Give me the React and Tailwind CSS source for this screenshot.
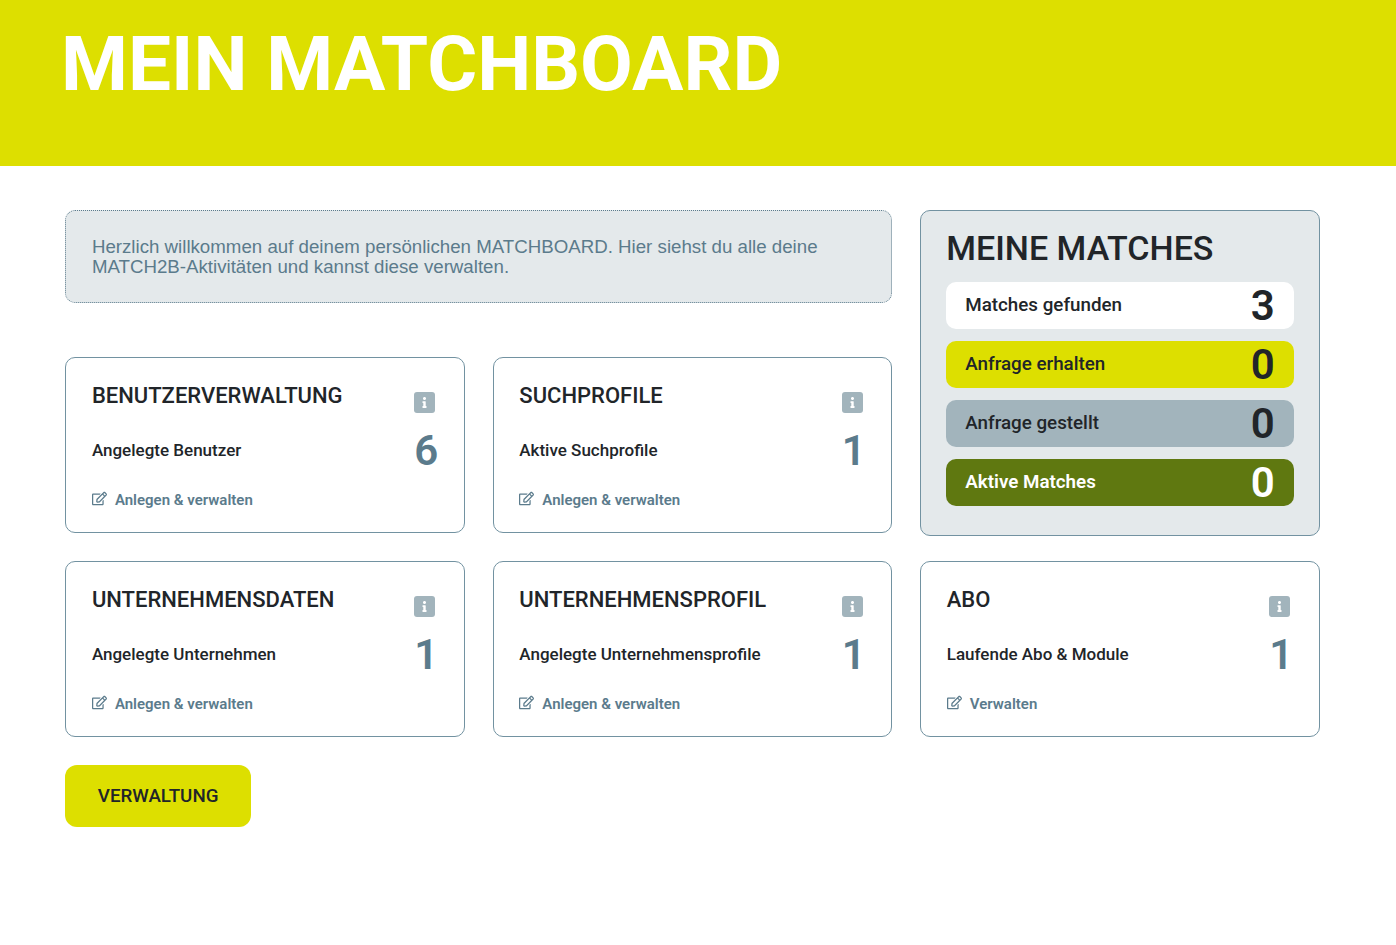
import { FaInfo, FaRegEdit } from "react-icons/fa";

const roboto = "font-['Roboto',sans-serif]";

function InfoCard({ title, label, count, action, className = "" }) {
  return (
    <div className={`relative h-[176px] rounded-[10px] border border-[#7292a1] bg-white px-[25.5px] pt-[25px] ${className}`}>
      <div className="flex items-start justify-between">
        <h3 className="text-[22px] font-medium leading-[26px] text-[#212529]">{title}</h3>
        <span className="mt-[9px] mr-[3px] flex h-[21px] w-[21px] items-center justify-center rounded-[3px] bg-[#a2b4bc] text-white">
          <FaInfo className="h-[11px] w-[11px]" />
        </span>
      </div>
      <div className="mt-[14px] flex items-center justify-between">
        <span className="text-[17px] font-medium text-[#212529]">{label}</span>
        <span className="text-[42px] font-semibold leading-[48px] text-[#5b7b8c]">{count}</span>
      </div>
      <a className="mt-[13.5px] flex items-center gap-[8px] text-[15px] font-semibold leading-[22px] text-[#5b7b8c]">
        <FaRegEdit className="-mt-[2px] h-[15px] w-[15px]" />
        {action}
      </a>
    </div>
  );
}

function MatchRow({ label, count, bg, text, weight = "font-medium" }) {
  return (
    <div className={`flex h-[47px] items-center justify-between rounded-[10px] pl-[19px] pr-[19.5px] ${bg} ${text}`}>
      <span className={`text-[18.8px] ${weight}`}>{label}</span>
      <span className="text-[42px] font-semibold leading-[47px]">{count}</span>
    </div>
  );
}

export default function App() {
  return (
    <div className={`min-h-[945px] bg-white ${roboto}`}>
      {/* Header */}
      <header className="h-[166px] bg-[#dddf00] pl-[61px] pt-[21px]">
        <h1 className="text-[76.5px] font-bold leading-[86px] text-white">MEIN MATCHBOARD</h1>
      </header>

      <main className="w-[1319.7px] pl-[65.4px] pt-[44px]">
        <div className="grid grid-cols-3 gap-x-[28px]">
          <div className="col-span-2">
            <div className="h-[93px] rounded-[10px] border border-dotted border-[#5b7b8c] bg-[#e4e9eb] px-[25.5px] pt-[25.5px] font-['Liberation_Sans',sans-serif] text-[18.7px] leading-[20px] text-[#5b7b8c]">
              Herzlich willkommen auf deinem persönlichen MATCHBOARD. Hier siehst du alle deine MATCH2B-Aktivitäten und kannst diese verwalten.
            </div>
            <div className="mt-[54px] grid grid-cols-2 gap-x-[28px]">
              <InfoCard title="BENUTZERVERWALTUNG" label="Angelegte Benutzer" count="6" action="Anlegen & verwalten" />
              <InfoCard title="SUCHPROFILE" label="Aktive Suchprofile" count="1" action="Anlegen & verwalten" />
            </div>
          </div>

          {/* Meine Matches */}
          <div className="h-[326px] rounded-[10px] border border-[#7292a1] bg-[#e4e9eb] pl-[25px] pr-[24.5px] pt-[15px]">
            <h2 className="text-[34px] font-medium leading-[44px] text-[#212529]">MEINE MATCHES</h2>
            <div className="mt-[12px] flex flex-col gap-[12px]">
              <MatchRow label="Matches gefunden" count="3" bg="bg-white" text="text-[#212529]" />
              <MatchRow label="Anfrage erhalten" count="0" bg="bg-[#dddf00]" text="text-[#212529]" />
              <MatchRow label="Anfrage gestellt" count="0" bg="bg-[#a2b4bc]" text="text-[#212529]" />
              <MatchRow label="Aktive Matches" count="0" bg="bg-[#5f7810]" text="text-white" weight="font-semibold" />
            </div>
          </div>
        </div>

        <div className="mt-[25px] grid grid-cols-3 gap-x-[28px]">
          <InfoCard title="UNTERNEHMENSDATEN" label="Angelegte Unternehmen" count="1" action="Anlegen & verwalten" />
          <InfoCard title="UNTERNEHMENSPROFIL" label="Angelegte Unternehmensprofile" count="1" action="Anlegen & verwalten" />
          <InfoCard title="ABO" label="Laufende Abo & Module" count="1" action="Verwalten" />
        </div>

        <button className="mt-[28px] h-[62px] w-[185.5px] rounded-[12px] bg-[#dddf00] text-[18.75px] font-medium text-[#212529]">
          VERWALTUNG
        </button>
      </main>
    </div>
  );
}
